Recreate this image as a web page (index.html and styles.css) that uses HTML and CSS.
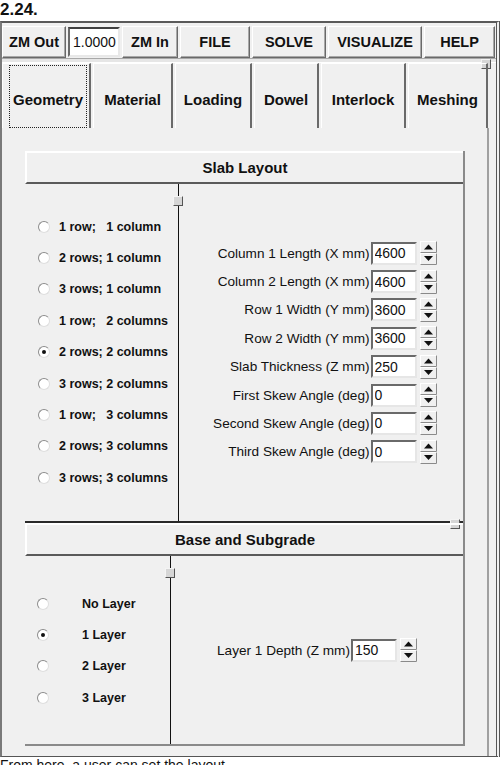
FILE: index.html
```html
<!DOCTYPE html>
<html lang="en">

<head>
    <meta charset="UTF-8">
    <title>Slab Layout</title>
    <link rel="stylesheet" href="styles.css">
</head>

<body>
    <div class="caption">2.24.</div>

    <div class="frame">
        <div class="toolbar">
            <button class="tool-btn btn-zoom-out">ZM Out</button>
            <input class="zoom-field" type="text" value="1.0000">
            <button class="tool-btn btn-zoom-in">ZM In</button>
            <button class="tool-btn btn-file">FILE</button>
            <button class="tool-btn btn-solve">SOLVE</button>
            <button class="tool-btn btn-visualize">VISUALIZE</button>
            <button class="tool-btn btn-help">HELP</button>
        </div>

        <div class="split-bar"><span class="knob knob-top"></span></div>

        <div class="tabs">
            <div class="tab tab-geometry"><span class="focus-ring"></span>Geometry</div>
            <div class="tab tab-material">Material</div>
            <div class="tab tab-loading">Loading</div>
            <div class="tab tab-dowel">Dowel</div>
            <div class="tab tab-interlock">Interlock</div>
            <div class="tab tab-meshing">Meshing</div>
        </div>

        <div class="tab-panel">
            <section class="group slab">
                <div class="group-head">Slab Layout</div>
                <div class="group-body">
                    <div class="choices">
                        <span class="knob knob-side"></span>
                        <div class="choice"><span class="radio"></span>1 row;   1 column</div>
                        <div class="choice"><span class="radio"></span>2 rows; 1 column</div>
                        <div class="choice"><span class="radio"></span>3 rows; 1 column</div>
                        <div class="choice"><span class="radio"></span>1 row;   2 columns</div>
                        <div class="choice"><span class="radio on"></span>2 rows; 2 columns</div>
                        <div class="choice"><span class="radio"></span>3 rows; 2 columns</div>
                        <div class="choice"><span class="radio"></span>1 row;   3 columns</div>
                        <div class="choice"><span class="radio"></span>2 rows; 3 columns</div>
                        <div class="choice"><span class="radio"></span>3 rows; 3 columns</div>
                    </div>
                    <div class="fields">
                        <div class="field-grid" id="slabFields"></div>
                    </div>
                </div>
                <span class="knob knob-split"></span>
            </section>

            <section class="group base">
                <div class="group-head">Base and Subgrade</div>
                <div class="group-body">
                    <div class="choices">
                        <span class="knob knob-side"></span>
                        <div class="choice"><span class="radio"></span>No Layer</div>
                        <div class="choice"><span class="radio on"></span>1 Layer</div>
                        <div class="choice"><span class="radio"></span>2 Layer</div>
                        <div class="choice"><span class="radio"></span>3 Layer</div>
                    </div>
                    <div class="fields">
                        <div class="field-grid" id="baseFields"></div>
                    </div>
                </div>
            </section>
        </div>
    </div>

    <p class="footer">From here, a user can set the layout</p>

    <script>
        const spin = `<svg class="spin" width="17" height="24" viewBox="0 0 17 24">
            <rect x="0.5" y="0.5" width="16" height="11" fill="#f0f0f0" stroke="#fff"/>
            <path d="M16.5 0.5V11.5H0.5" fill="none" stroke="#8a8a8a"/>
            <rect x="0.5" y="12.5" width="16" height="11" fill="#f0f0f0" stroke="#fff"/>
            <path d="M16.5 12.5V23.5H0.5" fill="none" stroke="#8a8a8a"/>
            <polygon points="4,8.5 13,8.5 8.5,3.5" fill="#111"/>
            <polygon points="4,15 13,15 8.5,20" fill="#111"/>
        </svg>`

        const slab = [
            ['Column 1 Length (X mm)', '4600'],
            ['Column 2 Length (X mm)', '4600'],
            ['Row 1 Width (Y mm)', '3600'],
            ['Row 2 Width (Y mm)', '3600'],
            ['Slab Thickness (Z mm)', '250'],
            ['First Skew Angle (deg)', '0'],
            ['Second Skew Angle (deg)', '0'],
            ['Third Skew Angle (deg)', '0']
        ]
        const base = [['Layer 1 Depth (Z mm)', '150']]

        function printFields(el, rows) {
            el.innerHTML = ''
            rows.map(([label, value]) => el.innerHTML +=
                `<span class="field-label">${label}</span><input class="num" type="text" value="${value}">${spin}`)
        }

        printFields(document.getElementById('slabFields'), slab)
        printFields(document.getElementById('baseFields'), base)
    </script>
</body>

</html>
```

FILE: styles.css
```css
body {
    margin: 0;
    width: 504px;
    height: 765px;
    overflow: hidden;
    background: #fff;
    color: #111;
    font-family: "Liberation Sans", Arial, sans-serif;
}

.caption {
    height: 21px;
    font-size: 17px;
    font-weight: bold;
    line-height: 19px;
}

.frame {
    width: 500px;
    box-sizing: border-box;
    background: #f0f0f0;
    border-top: 2px solid #5a5a5a;
    border-left: 2px solid #7a7a7a;
    border-right: 4px double #555;
    border-bottom: 1px solid #555;
}

.toolbar {
    display: flex;
    gap: 2px;
    height: 32px;
    padding-top: 3px;
}

.tool-btn {
    height: 32px;
    box-sizing: border-box;
    margin: 0;
    padding: 0;
    background: #f0f0f0;
    border: 1px solid;
    border-color: #fff #696969 #696969 #fff;
    box-shadow: inset -1px -1px 0 #a8a8a8;
    color: #111;
    font: bold 14.5px "Liberation Sans", Arial, sans-serif;
}

.btn-zoom-out { width: 64px; }
.btn-zoom-in { width: 56px; }
.btn-file { width: 70px; }
.btn-solve { width: 74px; }
.btn-visualize { width: 94px; }
.btn-help { width: 71px; }

.zoom-field {
    width: 52px;
    height: 30px;
    margin-top: 1px;
    box-sizing: border-box;
    padding: 0 0 0 3px;
    background: #fff;
    border: 2px solid;
    border-color: #404040 #e8e8e8 #e8e8e8 #6a6a6a;
    color: #111;
    font: 14px "Liberation Sans", Arial, sans-serif;
    outline: none;
}

.split-bar {
    position: relative;
    height: 3px;
    background: #e6e6e6;
    border-top: 1px solid #a8a8a8;
    border-bottom: 1px solid #fff;
}

.knob {
    position: absolute;
    width: 10px;
    height: 10px;
    box-sizing: border-box;
    background: #d6d6d6;
    border: 1px solid;
    border-color: #f4f4f4 #555 #555 #f4f4f4;
}

.knob-top {
    left: 479px;
    top: 0;
}

.tabs {
    display: flex;
    gap: 2px;
    height: 65px;
}

.tab {
    position: relative;
    height: 65px;
    box-sizing: border-box;
    padding-top: 6px;
    display: flex;
    align-items: center;
    justify-content: center;
    border-top: 1px solid #fff;
    border-left: 1px solid #fff;
    border-right: 2px solid #6a6a6a;
    font-size: 15px;
    font-weight: bold;
}

.tab-geometry { width: 89px; padding-left: 4px; }
.tab-material { width: 80px; }
.tab-loading { width: 77px; }
.tab-dowel { width: 65px; }
.tab-interlock { width: 85px; }
.tab-meshing { width: 80px; }

.focus-ring {
    position: absolute;
    left: 6px;
    right: 2px;
    top: 1px;
    bottom: 0;
    border: 1px dotted #222;
}

.tab-panel {
    width: 487px;
    box-sizing: border-box;
    padding: 23px 0 10px 23px;
    border-right: 2px solid #a0a0a0;
}

.group {
    position: relative;
    width: 440px;
    box-sizing: border-box;
    border-right: 2px solid #8a8a8a;
}

.group-head {
    height: 33px;
    box-sizing: border-box;
    display: flex;
    align-items: center;
    justify-content: center;
    border-top: 2px solid #fff;
    border-left: 2px solid #fff;
    border-bottom: 2px solid #5a5a5a;
    font-size: 15px;
    font-weight: bold;
}

.group-body {
    display: flex;
    border-bottom: 2px solid #2a2a2a;
}

.slab .group-body {
    height: 337px;
}

.base .group-body {
    height: 188px;
    border-bottom-color: #8a8a8a;
}

.knob-split {
    left: 425px;
    top: 368px;
}

.choices {
    position: relative;
    box-sizing: border-box;
    border-right: 1px solid #111;
}

.slab .choices {
    width: 154px;
    padding: 27px 0 0 13px;
}

.base .choices {
    width: 146px;
    padding: 32px 0 0 12px;
}

.slab .knob-side {
    left: 148px;
    top: 12px;
}

.base .knob-side {
    left: 140px;
    top: 12px;
}

.choice {
    height: 31.4px;
    display: flex;
    align-items: center;
    gap: 9px;
    font-size: 12.5px;
    font-weight: bold;
    white-space: pre;
}

.base .choice {
    height: 31.3px;
    gap: 33px;
}

.radio {
    position: relative;
    flex: none;
    width: 12px;
    height: 12px;
    box-sizing: border-box;
    border-radius: 50%;
    background: #fff;
    border: 1px solid;
    border-color: #8c8c8c #dedede #dedede #8c8c8c;
}

.radio.on::after {
    content: "";
    position: absolute;
    left: 3px;
    top: 3px;
    width: 4px;
    height: 4px;
    border-radius: 50%;
    background: #111;
}

.fields {
    flex: 1;
    display: flex;
    align-items: center;
    justify-content: center;
}

.field-grid {
    display: grid;
    grid-template-columns: auto 46px 19px;
    column-gap: 1px;
    row-gap: 4.4px;
    align-items: center;
}

.slab .field-grid {
    grid-template-columns: 164px 46px 19px;
}

.field-label {
    text-align: right;
    font-size: 13.6px;
    white-space: nowrap;
}

.num {
    width: 46px;
    height: 23px;
    box-sizing: border-box;
    padding: 0 2px;
    background: #fff;
    border: 2px solid;
    border-color: #6a6a6a #e6e6e6 #e6e6e6 #6a6a6a;
    color: #111;
    font: 14px "Liberation Sans", Arial, sans-serif;
    outline: none;
}

.spin {
    display: block;
    margin-left: 2px;
}

.footer {
    margin: 0;
    font-size: 14px;
    line-height: 16px;
}
```
